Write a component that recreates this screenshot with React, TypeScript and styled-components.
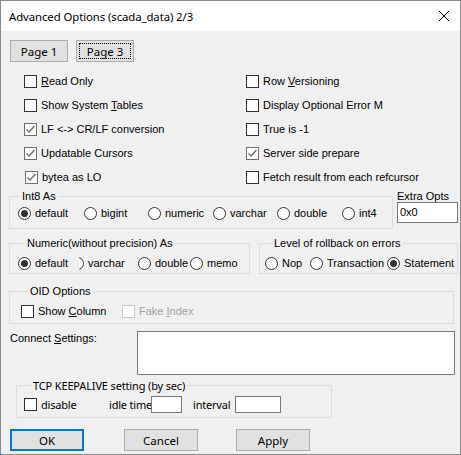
import React from 'react';
import { styled, createGlobalStyle } from 'styled-components';

const GlobalStyle = createGlobalStyle`
    html, body {
        margin: 0;
        padding: 0;
        background: #f0f0f0;
    }
    * {
        box-sizing: border-box;
    }
`;

const UI_FONT = `'Liberation Sans', Arial, sans-serif`;
const SEGOE = `'Noto Sans', 'Open Sans', sans-serif`;

const Frame = styled.div`
    width: 461px;
    height: 455px;
    border: 1px solid #8a8a8a;
    background: #f0f0f0;
    display: flex;
    flex-direction: column;
    font-family: ${UI_FONT};
    font-size: 11px;
    color: #000;
    overflow: hidden;
`;

const TitleBar = styled.div`
    height: 30px;
    flex: none;
    background: #fff;
    display: flex;
    align-items: center;
    justify-content: space-between;
    padding: 0 8px 0 8px;
`;

const Title = styled.span`
    font-family: ${SEGOE};
    font-size: 11.4px;
    letter-spacing: -0.1px;
`;

const CloseIcon = () => (
    <svg width="12" height="12" viewBox="0 0 12 12" style={{ marginRight: 2 }}>
        <path d="M1 1 L11 11 M11 1 L1 11" stroke="#000" strokeWidth="1" fill="none" />
    </svg>
);

const Content = styled.div`
    display: flex;
    flex-direction: column;
    padding: 0 0 0 8px;
`;

const PageRow = styled.div`
    display: flex;
    gap: 8px;
    margin: 9px 0 0 1px;
`;

const Button = styled.button<{ focused?: boolean; primary?: boolean; w: number }>`
    width: ${({ w }) => w}px;
    height: 22px;
    padding: 0;
    margin: 0;
    background: #e1e1e1;
    border: ${({ primary }) => (primary ? '2px solid #0078d7' : '1px solid #adadad')};
    font-family: ${SEGOE};
    font-size: 11.5px;
    color: #000;
    outline: ${({ focused }) => (focused ? '1px dotted #000' : 'none')};
    outline-offset: -4px;
`;

const CheckGrid = styled.div`
    display: grid;
    grid-template-columns: 222px 1fr;
    grid-auto-rows: 24px;
    margin: 7px 0 0 15px;
`;

const OptionItem = styled.label<{ w?: number; disabled?: boolean; nudge?: number }>`
    display: flex;
    align-items: center;
    flex: none;
    width: ${({ w }) => (w ? `${w}px` : 'auto')};
    padding-left: ${({ nudge }) => nudge || 0}px;
    white-space: nowrap;
    color: ${({ disabled }) => (disabled ? '#a0a0a0' : '#000')};
    font-family: ${UI_FONT};
    font-size: 11px;
`;

const SegoeItem = styled(OptionItem)`
    font-family: ${SEGOE};
    font-size: 11px;
    letter-spacing: -0.2px;
`;

const Text = styled.span`
    white-space: pre;
`;

const BoxMark = styled.span<{ checked?: boolean; disabled?: boolean }>`
    width: 13px;
    height: 13px;
    flex: none;
    margin-right: 4px;
    background: #fff;
    border: 1px solid ${({ checked, disabled }) => (disabled ? '#cccccc' : checked ? '#707070' : '#333')};
    display: flex;
    align-items: center;
    justify-content: center;
`;

const RadioMark = styled.span<{ checked?: boolean; clipped?: boolean }>`
    width: 13px;
    height: 13px;
    flex: none;
    margin-right: 4px;
    border-radius: 50%;
    background: #fff;
    border: 1px solid #333;
    display: flex;
    align-items: center;
    justify-content: center;
    clip-path: ${({ clipped }) => (clipped ? 'inset(0 0 0 8px)' : 'none')};
    &::after {
        content: '';
        display: ${({ checked }) => (checked ? 'block' : 'none')};
        width: 7px;
        height: 7px;
        border-radius: 50%;
        background: #333;
    }
`;

const U = styled.span`
    text-decoration: underline;
    text-underline-offset: 1px;
`;

const Check = ({ checked, disabled }: { checked?: boolean; disabled?: boolean }) => (
    <BoxMark checked={checked} disabled={disabled}>
        {checked && (
            <svg width="11" height="11" viewBox="0 0 11 11">
                <path d="M1.5 5.5 L4 8 L9.5 2" stroke="#6d6d6d" strokeWidth="1.3" fill="none" />
            </svg>
        )}
    </BoxMark>
);

const Group = styled.fieldset<{ w: number; pt: number; pb: number; pl: number }>`
    width: ${({ w }) => w}px;
    flex: none;
    margin: 0;
    padding: ${({ pt, pb, pl }) => `${pt}px 0 ${pb}px ${pl}px`};
    border: 1px solid #dcdcdc;
    min-width: 0;
`;

const Legend = styled.legend<{ inset: number; segoe?: boolean }>`
    padding: 0 2px;
    margin-left: ${({ inset }) => inset}px;
    line-height: 13px;
    white-space: nowrap;
    font-family: ${({ segoe }) => (segoe ? SEGOE : UI_FONT)};
    font-size: ${({ segoe }) => (segoe ? '11px' : '11px')};
    letter-spacing: ${({ segoe }) => (segoe ? '-0.15px' : '0')};
`;

const OptionRow = styled.div`
    display: flex;
    align-items: center;
    height: 20px;
`;

const SectionRow = styled.div<{ mt: number; gap: number; ml?: number }>`
    display: flex;
    align-items: flex-start;
    gap: ${({ gap }) => gap}px;
    margin-top: ${({ mt }) => mt}px;
    margin-left: ${({ ml }) => ml || 0}px;
`;

const ExtraCol = styled.div`
    display: flex;
    flex-direction: column;
`;

const SmallLabel = styled.span`
    line-height: 12px;
    height: 12px;
`;

const TextBox = styled.div<{ w: number; h: number }>`
    width: ${({ w }) => w}px;
    height: ${({ h }) => h}px;
    flex: none;
    background: #fff;
    border: 1px solid #7a7a7a;
    padding: 2px 0 0 2px;
    line-height: 14px;
`;

const ConnectRow = styled.div`
    display: flex;
    margin-top: 7px;
`;

const ConnectLabel = styled.span`
    width: 127px;
    margin: 1px 0 0 1px;
    line-height: 13px;
`;

const FieldLabel = styled.span<{ w: number; ml?: number }>`
    width: ${({ w }) => w}px;
    margin-left: ${({ ml }) => ml || 0}px;
    flex: none;
    white-space: nowrap;
    font-family: ${SEGOE};
    font-size: 11px;
    letter-spacing: -0.2px;
`;

const ButtonRow = styled.div`
    display: flex;
    margin: 11px 0 0 1px;
`;

const Spacer = styled.span<{ w: number }>`
    width: ${({ w }) => w}px;
    flex: none;
`;

const Radio = ({
    label,
    w,
    checked,
    clipped
}: {
    label: string;
    w?: number;
    checked?: boolean;
    clipped?: boolean;
}) => (
    <OptionItem w={w}>
        <RadioMark checked={checked} clipped={clipped} />
        <Text>{label}</Text>
    </OptionItem>
);

const App = () => {
    return (
        <>
            <GlobalStyle />
            <Frame>
                <TitleBar>
                    <Title>Advanced Options (scada_data) 2/3</Title>
                    <CloseIcon />
                </TitleBar>
                <Content>
                    <PageRow>
                        <Button w={58}>Page 1</Button>
                        <Button w={58} focused>
                            Page 3
                        </Button>
                    </PageRow>

                    <CheckGrid>
                        <OptionItem>
                            <Check />
                            <Text>
                                <U>R</U>ead Only
                            </Text>
                        </OptionItem>
                        <OptionItem>
                            <Check />
                            <Text>
                                Row <U>V</U>ersioning
                            </Text>
                        </OptionItem>
                        <OptionItem>
                            <Check />
                            <Text>
                                Show System <U>T</U>ables
                            </Text>
                        </OptionItem>
                        <OptionItem>
                            <Check />
                            <Text>Display Optional Error M</Text>
                        </OptionItem>
                        <OptionItem>
                            <Check checked />
                            <Text>LF &lt;-&gt; CR/LF conversion</Text>
                        </OptionItem>
                        <OptionItem>
                            <Check />
                            <Text>True is -1</Text>
                        </OptionItem>
                        <OptionItem>
                            <Check checked />
                            <Text>Updatable Cursors</Text>
                        </OptionItem>
                        <OptionItem>
                            <Check checked />
                            <Text>Server side prepare</Text>
                        </OptionItem>
                        <OptionItem nudge={1}>
                            <Check checked />
                            <Text>bytea as LO</Text>
                        </OptionItem>
                        <OptionItem>
                            <Check />
                            <Text>Fetch result from each refcursor</Text>
                        </OptionItem>
                    </CheckGrid>

                    <SectionRow mt={1} gap={4}>
                        <Group w={384} pt={0} pb={5} pl={8}>
                            <Legend inset={2}>Int8 As</Legend>
                            <OptionRow>
                                <Radio label="default" w={66} checked />
                                <Radio label="bigint" w={64} />
                                <Radio label="numeric" w={65} />
                                <Radio label="varchar" w={64} />
                                <Radio label="double" w={65} />
                                <Radio label="int4" />
                            </OptionRow>
                        </Group>
                        <ExtraCol>
                            <SmallLabel>Extra Opts</SmallLabel>
                            <TextBox w={61} h={21}>
                                0x0
                            </TextBox>
                        </ExtraCol>
                    </SectionRow>

                    <SectionRow mt={8} gap={9}>
                        <Group w={241} pt={3} pb={0} pl={8}>
                            <Legend inset={7}>Numeric(without precision) As</Legend>
                            <OptionRow>
                                <Radio label="default" w={53} checked />
                                <Radio label="varchar" w={67} clipped />
                                <Radio label="double" w={52} />
                                <Radio label="memo" />
                            </OptionRow>
                        </Group>
                        <Group w={199} pt={3} pb={0} pl={5}>
                            <Legend inset={7}>Level of rollback on errors</Legend>
                            <OptionRow>
                                <Radio label="Nop" w={45} />
                                <Radio label="Transaction" w={77} />
                                <Radio label="Statement" checked />
                            </OptionRow>
                        </Group>
                    </SectionRow>

                    <SectionRow mt={11} gap={0}>
                        <Group w={445} pt={3} pb={2} pl={11}>
                            <Legend inset={7}>OID Options</Legend>
                            <OptionRow>
                                <OptionItem w={101}>
                                    <Check />
                                    <Text>
                                        Show <U>C</U>olumn
                                    </Text>
                                </OptionItem>
                                <OptionItem disabled>
                                    <Check disabled />
                                    <Text>
                                        Fake <U>I</U>ndex
                                    </Text>
                                </OptionItem>
                            </OptionRow>
                        </Group>
                    </SectionRow>

                    <ConnectRow>
                        <ConnectLabel>
                            Connect <U>S</U>ettings:
                        </ConnectLabel>
                        <TextBox w={318} h={44} />
                    </ConnectRow>

                    <SectionRow mt={4} gap={0} ml={7}>
                        <Group w={316} pt={2} pb={3} pl={7}>
                            <Legend inset={7} segoe>
                                TCP KEEPALIVE setting (by sec)
                            </Legend>
                            <OptionRow>
                                <SegoeItem w={85}>
                                    <Check />
                                    <Text>disable</Text>
                                </SegoeItem>
                                <FieldLabel w={42}>idle time</FieldLabel>
                                <TextBox w={31} h={17} />
                                <FieldLabel w={42} ml={11}>
                                    interval
                                </FieldLabel>
                                <TextBox w={46} h={17} />
                            </OptionRow>
                        </Group>
                    </SectionRow>

                    <ButtonRow>
                        <Button w={74} primary>
                            OK
                        </Button>
                        <Spacer w={40} />
                        <Button w={74}>Cancel</Button>
                        <Spacer w={38} />
                        <Button w={74}>Apply</Button>
                    </ButtonRow>
                </Content>
            </Frame>
        </>
    );
};

export default App;
